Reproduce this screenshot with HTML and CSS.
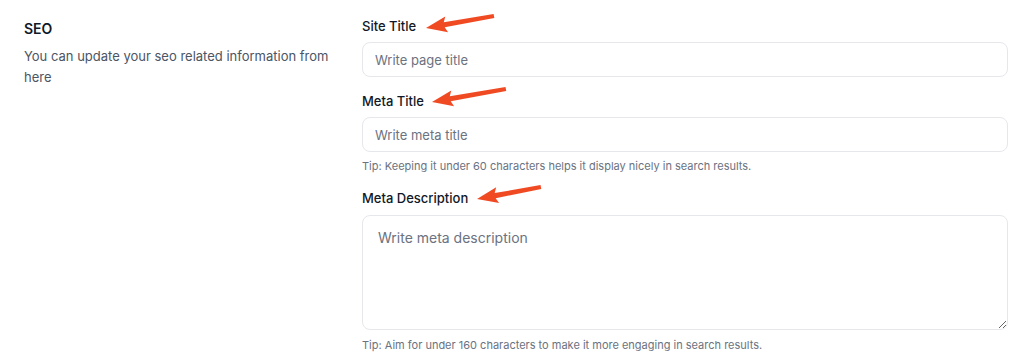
FILE: index.html
```html
<!DOCTYPE html>
<html lang="en">
<head>
    <meta charset="UTF-8">
    <title>SEO Settings</title>
    <link rel="stylesheet" href="styles.css">
</head>
<body>
    <div class="settings">
        <div class="intro">
            <h2 class="intro-title">SEO</h2>
            <p class="intro-text">You can update your seo related information from here</p>
        </div>

        <div class="fields">
            <div class="field">
                <label for="siteTitle" class="field-label">Site Title</label>
                <input type="text" id="siteTitle" class="field-input" placeholder="Write page title">
            </div>
            <div class="field">
                <label for="metaTitle" class="field-label">Meta Title</label>
                <input type="text" id="metaTitle" class="field-input" placeholder="Write meta title">
                <p class="field-tip">Tip: Keeping it under 60 characters helps it display nicely in search results.</p>
            </div>
            <div class="field">
                <label for="metaDesc" class="field-label">Meta Description</label>
                <textarea id="metaDesc" class="field-textarea" placeholder="Write meta description"></textarea>
                <p class="field-tip">Tip: Aim for under 160 characters to make it more engaging in search results.</p>
            </div>
        </div>
    </div>

    <!-- annotation arrows drawn over the screenshot -->
    <svg class="arrows" width="1024" height="362" viewBox="0 0 1024 362">
        <g fill="#f04a23">
            <polygon transform="translate(426 28) rotate(-10)" points="0,0 21,-8 18.5,-2.6 69,-2 69,2 18.5,2.6 21,8"/>
            <polygon transform="translate(432 102) rotate(-10)" points="0,0 21,-8 18.5,-2.6 75,-2 75,2 18.5,2.6 21,8"/>
            <polygon transform="translate(477 199) rotate(-10.6)" points="0,0 21,-8 18.5,-2.6 65,-2 65,2 18.5,2.6 21,8"/>
        </g>
    </svg>
</body>
</html>
```

FILE: styles.css
```css
body {
    margin: 0;
    font-family: Inter, "Noto Sans", Arial, sans-serif;
    background: #fff;
    color: #111827;
}
.settings {
    display: grid;
    grid-template-columns: 314px 1fr;
    column-gap: 24px;
    padding: 16px 16px 0 24px;
}
.intro {
    padding-top: 3px;
}
.intro-title {
    margin: 0;
    font-size: 14px;
    font-weight: 600;
    line-height: 20px;
    color: #111827;
}
.intro-text {
    margin: 7px 0 0;
    font-size: 13px;
    line-height: 21px;
    color: #4b5563;
}
.field {
    display: flex;
    flex-direction: column;
    margin-bottom: 14px;
}
.field-label {
    font-size: 13px;
    font-weight: 500;
    line-height: 20px;
    margin-bottom: 6px;
    color: #111827;
}
.field-input, .field-textarea {
    box-sizing: border-box;
    width: 100%;
    border: 1px solid #e5e7eb;
    border-radius: 8px;
    font-family: inherit;
    color: #111827;
    background: #fff;
    outline: none;
}
.field-input {
    height: 35px;
    padding: 0 12px;
    font-size: 13px;
}
.field-textarea {
    height: 115px;
    margin-top: 1px;
    padding: 12px 15px;
    font-size: 14px;
    line-height: 20px;
    resize: vertical;
}
.field-input::placeholder, .field-textarea::placeholder {
    color: #6b7280;
}
.field-tip {
    margin: 6px 0 0;
    font-size: 11px;
    line-height: 16px;
    color: #6b7280;
}
.field-textarea + .field-tip {
    margin-top: 7px;
}
/* arrows lie over the labels */
.arrows {
    position: absolute;
    top: 0;
    left: 0;
    pointer-events: none;
}
```
